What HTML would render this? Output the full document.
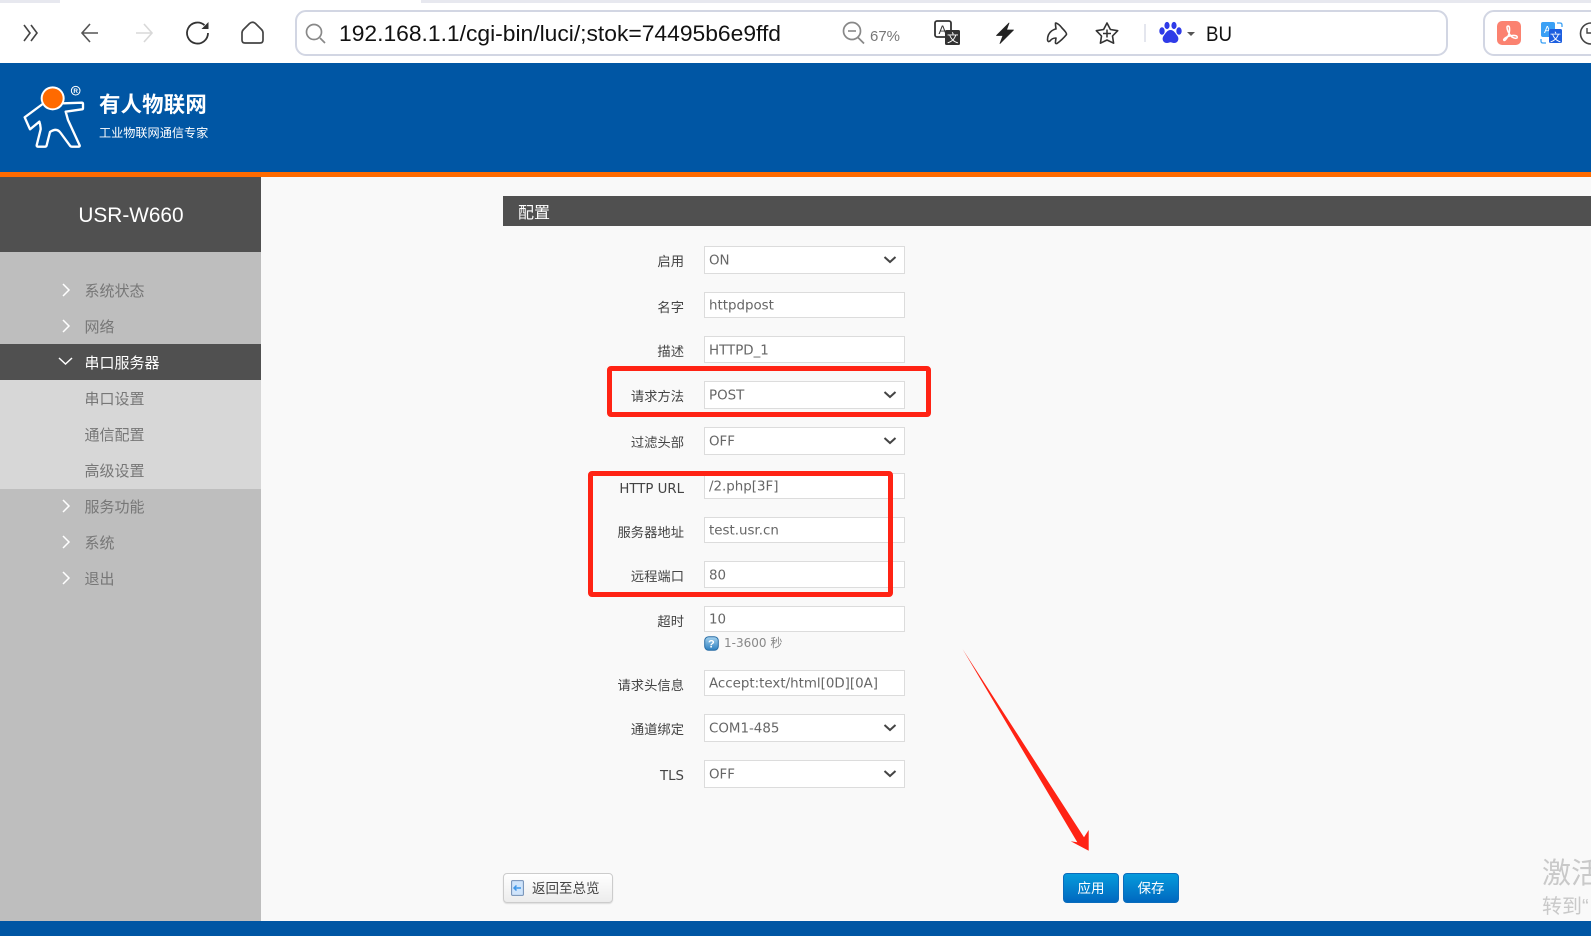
<!DOCTYPE html>
<html lang="zh"><head><meta charset="utf-8"><title>USR-W660</title>
<style>
html,body{margin:0;padding:0}
body{width:1591px;height:936px;overflow:hidden;position:relative;background:#f9f9f9;font-family:"Liberation Sans","Noto Sans CJK SC",sans-serif}
.a{position:absolute}
.t{position:absolute;white-space:nowrap;line-height:20px;height:20px}
.m{left:84.500px;font-size:15px;color:#777}
.l{right:907px;font-size:13.3px;color:#444;font-family:"DejaVu Sans","Noto Sans CJK SC",sans-serif}
.l.cjk{font-family:"Noto Sans CJK SC",sans-serif}
.f{position:absolute;left:704px;width:201px;background:#fff;border:1px solid #dcdcdc;font:13.4px/1 "DejaVu Sans",sans-serif;color:#666;box-sizing:border-box}
.f span{position:absolute;left:4px;top:calc(50% + 1px);transform:translateY(-50%);white-space:nowrap}
.f svg{position:absolute;right:7px;top:50%;margin-top:-5px}
.r{position:absolute;border:5px solid #ff2314;border-radius:4px;box-sizing:border-box}
.btn{position:absolute;top:873px;height:30px;box-sizing:border-box;border-radius:4px;text-align:center;font-size:13.5px;line-height:29px;color:#fff;background:linear-gradient(#069bdc,#0068c0);border:1px solid #0a6cbc}
</style></head><body>

<!-- browser chrome -->
<div class="a" style="left:0;top:0;width:1591px;height:63px;background:#fff"></div>
<div class="a" style="left:0;top:0;width:60px;height:3px;background:#e7e8ef"></div>
<div class="a" style="left:421px;top:0;width:1170px;height:3px;background:#e7e8ef"></div>
<div class="a" style="left:295px;top:10px;width:1153px;height:46px;box-sizing:border-box;border:2px solid #d2d6e3;border-radius:11px"></div>
<div class="a" style="left:1483px;top:10px;width:130px;height:46px;box-sizing:border-box;border:2px solid #d2d6e3;border-radius:11px"></div>

<svg class="a" style="left:0;top:0" width="1591" height="63" viewBox="0 0 1591 63" fill="none">
 <path d="M24 25l6 8-6 8M31 25l6 8-6 8" stroke="#444" stroke-width="1.6"/>
 <path d="M98 33H83M90 24l-8 9 8 9" stroke="#555" stroke-width="1.6"/>
 <path d="M136 33h15M144 24l8 9-8 9" stroke="#d8d8d8" stroke-width="1.6"/>
 <path d="M208 33a10.500 10.500 0 1 1-3.500-7.800" stroke="#333" stroke-width="1.800"/>
 <path d="M208.500 22v7h-7z" fill="#333"/>
 <path d="M242 33q0-2 1.500-3.500l6-6q3-2.500 6 0l6 6q1.500 1.500 1.500 3.500v7q0 3-3 3h-15q-3 0-3-3z" stroke="#444" stroke-width="1.700"/>
 <circle cx="314" cy="32" r="7.500" stroke="#888" stroke-width="1.700"/><path d="M320 38l5 5" stroke="#888" stroke-width="1.700"/>
 <text x="339" y="41" font-family="Liberation Sans,sans-serif" font-size="22" fill="#111" textLength="442" lengthAdjust="spacingAndGlyphs">192.168.1.1/cgi-bin/luci/;stok=74495b6e9ffd</text>
 <circle cx="852" cy="31" r="8.500" stroke="#888" stroke-width="1.700"/><path d="M858 37.500l6 6" stroke="#888" stroke-width="1.800"/><path d="M848 31h8" stroke="#888" stroke-width="1.600"/>
 <text x="870" y="41" font-family="Liberation Sans,sans-serif" font-size="15" fill="#777" textLength="30" lengthAdjust="spacingAndGlyphs">67%</text>
 <rect x="935" y="21" width="16" height="16" rx="2" stroke="#333" stroke-width="1.800" fill="#fff"/>
 <text x="938.500" y="34" font-family="Liberation Sans,sans-serif" font-size="12" fill="#333">A</text>
 <rect x="945" y="30" width="15" height="15" rx="1.500" fill="#333"/>
 <text x="947" y="42" font-family="Noto Sans CJK SC,sans-serif" font-size="11.500" fill="#fff">文</text>
 <path d="M1009 23l-12.500 12.500h6.500l-3 8 13.500-13.500h-7z" fill="#222" stroke="#222" stroke-width=".8" stroke-linejoin="round"/>
 <path d="M1056 23q3 1 6 5 5 5 4.500 6.500-4 5-9.500 9-2 .5-1.500-2l.5-3.500q-4 0-6 3-2 1.500-2.500-1 0-6 4-9 3-2 4.500-2l-.5-4q0-2 0-2z" stroke="#333" stroke-width="1.600" stroke-linejoin="round"/>
 <path d="M1107 23l3.400 6.500 7.300 1.200-5.200 5.300 1.100 7.200-6.600-3.200-6.600 3.200 1.100-7.200-5.200-5.300 7.300-1.200z" stroke="#333" stroke-width="1.600" stroke-linejoin="round"/>
 <path d="M1103 33.500h8M1107 29.500v8" stroke="#333" stroke-width="1.500"/>
 <path d="M1145 24v18" stroke="#d2d6e3" stroke-width="1.200"/>
 <g fill="#2f3be8"><ellipse cx="1162" cy="31" rx="2.700" ry="3.800"/><ellipse cx="1167" cy="25.500" rx="2.600" ry="3.600"/><ellipse cx="1174" cy="25.500" rx="2.600" ry="3.600"/><ellipse cx="1179" cy="31" rx="2.700" ry="3.800"/><path d="M1170.500 30c3.500 0 5 3.500 7 6 2 3 .5 7-3.500 7-1.500 0-2.500-.7-3.500-.7s-2 .7-3.500.7c-4 0-5.500-4-3.500-7 2-2.500 3.500-6 7-6z"/></g>
 <path d="M1187 32h8l-4 4z" fill="#555"/>
 <text x="1206" y="41" font-family="Liberation Sans,sans-serif" font-size="21" fill="#111" textLength="26" lengthAdjust="spacingAndGlyphs">BU</text>
 <rect x="1497" y="21" width="24" height="24" rx="5" fill="#fb8270"/>
 <path d="M1508 26q-1.500 0-.8 3 1.300 5 4.800 8 3 2 5 1 1-2-2-2.500-6-.5-10.500 3-1.500 1.500-.3 2 1.300 0 3.300-3.500 2.500-4 2-9-.2-2-1.500-2z" stroke="#fff" stroke-width="1.500"/>
 <rect x="1541" y="22" width="14" height="15" rx="2" fill="#3aa0f5"/>
 <text x="1544" y="33" font-family="Liberation Sans,sans-serif" font-size="10" fill="#fff">A</text>
 <rect x="1549" y="29" width="13" height="14" rx="1.500" fill="#1d5fe0"/>
 <text x="1550" y="41" font-family="Noto Sans CJK SC,sans-serif" font-size="11" fill="#fff">文</text>
 <path d="M1557 23h3q2 0 2 2v2M1541 39v2q0 2 2 2h3" stroke="#3aa0f5" stroke-width="1.300"/>
 <path d="M1591 23a10.500 10.500 0 1 0 0 21" stroke="#444" stroke-width="1.600"/><path d="M1591 33h-4v-5" stroke="#444" stroke-width="1.400"/>
</svg>

<!-- header -->
<div class="a" style="left:0;top:63px;width:1591px;height:109px;background:#0056a4"></div>
<div class="a" style="left:0;top:172px;width:1591px;height:5px;background:#ff6a00"></div>
<svg class="a" style="left:0;top:70px" width="90" height="90" viewBox="0 0 270 270" fill="none">
 <path d="M128 102L74 142l16 36 28-23q4 12 4 23l-12 48q0 4 5 4h20q4 0 5-4l10-40q20-14 32 3l28 38q2 3 6 3h20q4 0 3-4l-35-76-7-25 49-7q3 0 3-4v-12q0-4-4-4l-54 2" stroke="#fff" stroke-width="7" stroke-linejoin="round" stroke-linecap="round"/>
 <circle cx="158" cy="85" r="36" fill="#fff"/><circle cx="158" cy="85" r="30" fill="#ff6a00"/>
 <circle cx="227" cy="62" r="13" stroke="#fff" stroke-width="3"/>
 <text x="220" y="69" font-family="Liberation Sans,sans-serif" font-size="19" font-weight="bold" fill="#fff">R</text>
</svg>
<div class="t" style="left:99px;top:95px;font-size:21.400px;font-weight:bold;color:#fff;letter-spacing:.2px">有人物联网</div>
<div class="t" style="left:99px;top:123px;font-size:12.150px;color:#fff">工业物联网通信专家</div>

<!-- sidebar -->
<div class="a" style="left:0;top:177px;width:261px;height:744px;background:#bebebe"></div>
<div class="a" style="left:0;top:177px;width:261px;height:75px;background:#505050"></div>
<div class="t" style="left:0;width:262px;text-align:center;top:205.500px;font-size:20.800px;color:#fff">USR-W660</div>
<div class="a" style="left:0;top:344px;width:261px;height:36px;background:#505050"></div>
<div class="a" style="left:0;top:380px;width:261px;height:109px;background:#d7d7d7"></div>
<div class="t m" style="top:281.500px">系统状态</div>
<div class="t m" style="top:317.500px">网络</div>
<div class="t m" style="top:353.500px;color:#fff">串口服务器</div>
<div class="t m" style="top:389.500px">串口设置</div>
<div class="t m" style="top:425.500px">通信配置</div>
<div class="t m" style="top:462px">高级设置</div>
<div class="t m" style="top:498px">服务功能</div>
<div class="t m" style="top:534px">系统</div>
<div class="t m" style="top:570px">退出</div>
<svg class="a" style="left:55px;top:279px" width="24" height="310" viewBox="0 0 24 310" fill="none" stroke="#fff" stroke-width="1.500">
 <path d="M8 5l6 6-6 6M8 41l6 6-6 6M4 79l6.500 6 6.500-6M8 221l6 6-6 6M8 257l6 6-6 6M8 293l6 6-6 6"/>
</svg>

<!-- panel -->
<div class="a" style="left:503px;top:196px;width:1088px;height:30px;background:#505050"></div>
<div class="t" style="left:518px;top:204px;font-size:16px;color:#fff">配置</div>

<div class="t l cjk" style="top:251px">启用</div>
<div class="f" style="top:246px;height:28px"><span>ON</span><svg width="14" height="10" fill="none"><path d="M1.500 2l5.500 5 5.500-5" stroke="#444" stroke-width="2"/></svg></div>
<div class="t l cjk" style="top:297px">名字</div>
<div class="f" style="top:292px;height:26px"><span>httpdpost</span></div>
<div class="t l cjk" style="top:341px">描述</div>
<div class="f" style="top:336px;height:27px"><span>HTTPD_1</span></div>
<div class="t l cjk" style="top:386px">请求方法</div>
<div class="f" style="top:381px;height:28px"><span>POST</span><svg width="14" height="10" fill="none"><path d="M1.500 2l5.500 5 5.500-5" stroke="#444" stroke-width="2"/></svg></div>
<div class="t l cjk" style="top:432px">过滤头部</div>
<div class="f" style="top:427px;height:28px"><span>OFF</span><svg width="14" height="10" fill="none"><path d="M1.500 2l5.500 5 5.500-5" stroke="#444" stroke-width="2"/></svg></div>
<div class="t l" style="top:480px">HTTP URL</div>
<div class="f" style="top:473px;height:26px"><span>/2.php[3F]</span></div>
<div class="t l cjk" style="top:522px">服务器地址</div>
<div class="f" style="top:517px;height:26px"><span>test.usr.cn</span></div>
<div class="t l cjk" style="top:566px">远程端口</div>
<div class="f" style="top:561px;height:27px"><span>80</span></div>
<div class="t l cjk" style="top:611px">超时</div>
<div class="f" style="top:606px;height:26px"><span>10</span></div>
<svg class="a" style="left:704px;top:636px" width="15" height="15" viewBox="0 0 15 15"><defs><linearGradient id="g" x1="0" y1="0" x2="0" y2="1"><stop offset="0" stop-color="#a8d4f0"/><stop offset="1" stop-color="#2c7fc0"/></linearGradient></defs><rect x=".7" y=".7" width="13.600" height="13.600" rx="4" fill="url(#g)" stroke="#2a6ea6" stroke-width="1"/><text x="4" y="11.500" font-family="Liberation Sans,sans-serif" font-size="11" font-weight="bold" fill="#fff">?</text></svg>
<div class="t" style="left:724px;top:633px;font:12px/20px 'DejaVu Sans','Noto Sans CJK SC',sans-serif;color:#888">1-3600 秒</div>
<div class="t l cjk" style="top:675px">请求头信息</div>
<div class="f" style="top:670px;height:26px"><span>Accept:text/html[0D][0A]</span></div>
<div class="t l cjk" style="top:719px">通道绑定</div>
<div class="f" style="top:714px;height:28px"><span>COM1-485</span><svg width="14" height="10" fill="none"><path d="M1.500 2l5.500 5 5.500-5" stroke="#444" stroke-width="2"/></svg></div>
<div class="t l" style="top:767px">TLS</div>
<div class="f" style="top:760px;height:28px"><span>OFF</span><svg width="14" height="10" fill="none"><path d="M1.500 2l5.500 5 5.500-5" stroke="#444" stroke-width="2"/></svg></div>

<!-- annotations -->
<div class="r" style="left:607px;top:366px;width:324px;height:51px"></div>
<div class="r" style="left:588px;top:471px;width:305px;height:126px"></div>
<svg class="a" style="left:950px;top:640px" width="150" height="220" viewBox="950 640 150 220">
 <path d="M962.500 649L1084 837.300l4.700-7.300v20.700L1070.700 841.300l6.600 1z" fill="#ff2314"/>
</svg>

<!-- buttons -->
<div class="a" style="left:503px;top:873px;width:110px;height:30px;box-sizing:border-box;border:1px solid #ccc;border-radius:4px;background:linear-gradient(#fff,#ececec);box-shadow:0 1px 1px #ddd"></div>
<svg class="a" style="left:511px;top:880px" width="13" height="16" viewBox="0 0 13 16"><rect x=".6" y=".6" width="11.800" height="14.800" rx="1" fill="#cfe4fb" stroke="#6f8db5"/><path d="M3 8h7M5.500 5.500l-2.500 2.500 2.500 2.500" stroke="#3f96e8" stroke-width="1.500" fill="none"/></svg>
<div class="t" style="left:532px;top:879px;font-size:13.500px;color:#444">返回至总览</div>
<div class="btn" style="left:1063px;width:56px">应用</div>
<div class="btn" style="left:1123px;width:56px">保存</div>

<!-- watermark -->
<div class="t" style="left:1542px;top:857px;height:34px;line-height:34px;font-size:29px;color:#c9c9c9;width:49px;overflow:hidden">激活</div>
<div class="t" style="left:1542px;top:894px;height:26px;line-height:26px;font-size:20px;color:#c9c9c9;width:49px;overflow:hidden">转到“</div>

<!-- footer -->
<div class="a" style="left:0;top:921px;width:1591px;height:15px;background:#0056a4"></div>
</body></html>
